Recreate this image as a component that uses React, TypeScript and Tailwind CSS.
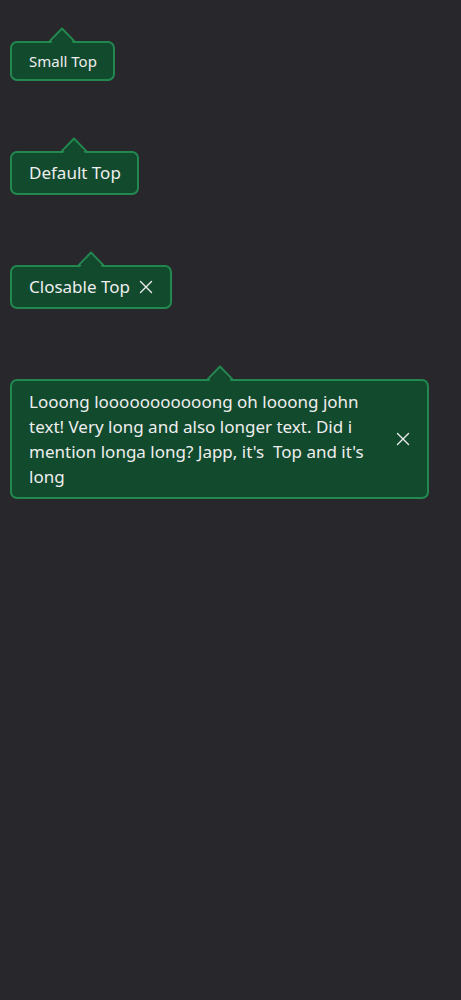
import React from "react";

const Arrow = () => (
  <svg
    className="absolute top-0 left-1/2 -translate-x-1/2 z-10"
    width="26"
    height="16"
    viewBox="0 0 26 16"
  >
    <polygon points="2,16 13,2.5 24,16" fill="#124a2e" />
    <polyline
      points="0,15 13,1.5 26,15"
      fill="none"
      stroke="#21894f"
      strokeWidth="2"
      strokeLinejoin="round"
    />
  </svg>
);

const XIcon = () => (
  <svg width="16" height="16" viewBox="0 0 16 16" className="shrink-0">
    <path d="M2.5 2.5 L13.5 13.5 M13.5 2.5 L2.5 13.5" stroke="#ececec" strokeWidth="1.4" strokeLinecap="round" />
  </svg>
);

function Tip({
  children,
  small,
  closable,
  long,
  className = "",
}: {
  children: React.ReactNode;
  small?: boolean;
  closable?: boolean;
  long?: boolean;
  className?: string;
}) {
  return (
    <div className={"relative pt-[14px] self-start " + className}>
      <Arrow />
      <div
        className={
          "flex items-center gap-2 rounded-[7px] border-2 border-[#21894f] bg-[#124a2e] pl-[17px] pr-4 py-2 text-[#eeeeee] " +
          (small
            ? "text-[15px] leading-[20px]"
            : long
            ? "text-[17px] leading-[25px]"
            : "text-[17px] leading-[24px]")
        }
      >
        <div className="min-w-0">{children}</div>
        {closable && <XIcon />}
      </div>
    </div>
  );
}

export default function App() {
  return (
    <div
      className="min-h-[1000px] w-full bg-[#28272c] pl-[10px] pt-[27px] flex flex-col gap-[56px]"
      style={{ fontFamily: '"Noto Sans", "Open Sans", sans-serif' }}
    >
      <Tip small>Small Top</Tip>
      <Tip>Default Top</Tip>
      <Tip closable>Closable Top</Tip>
      <Tip closable long className="w-[419px]">
        Looong looooooooooong oh looong john text! Very long and also longer text. Did i mention
        longa long? Japp, it's {"\u00a0"}Top and it's long
      </Tip>
    </div>
  );
}
